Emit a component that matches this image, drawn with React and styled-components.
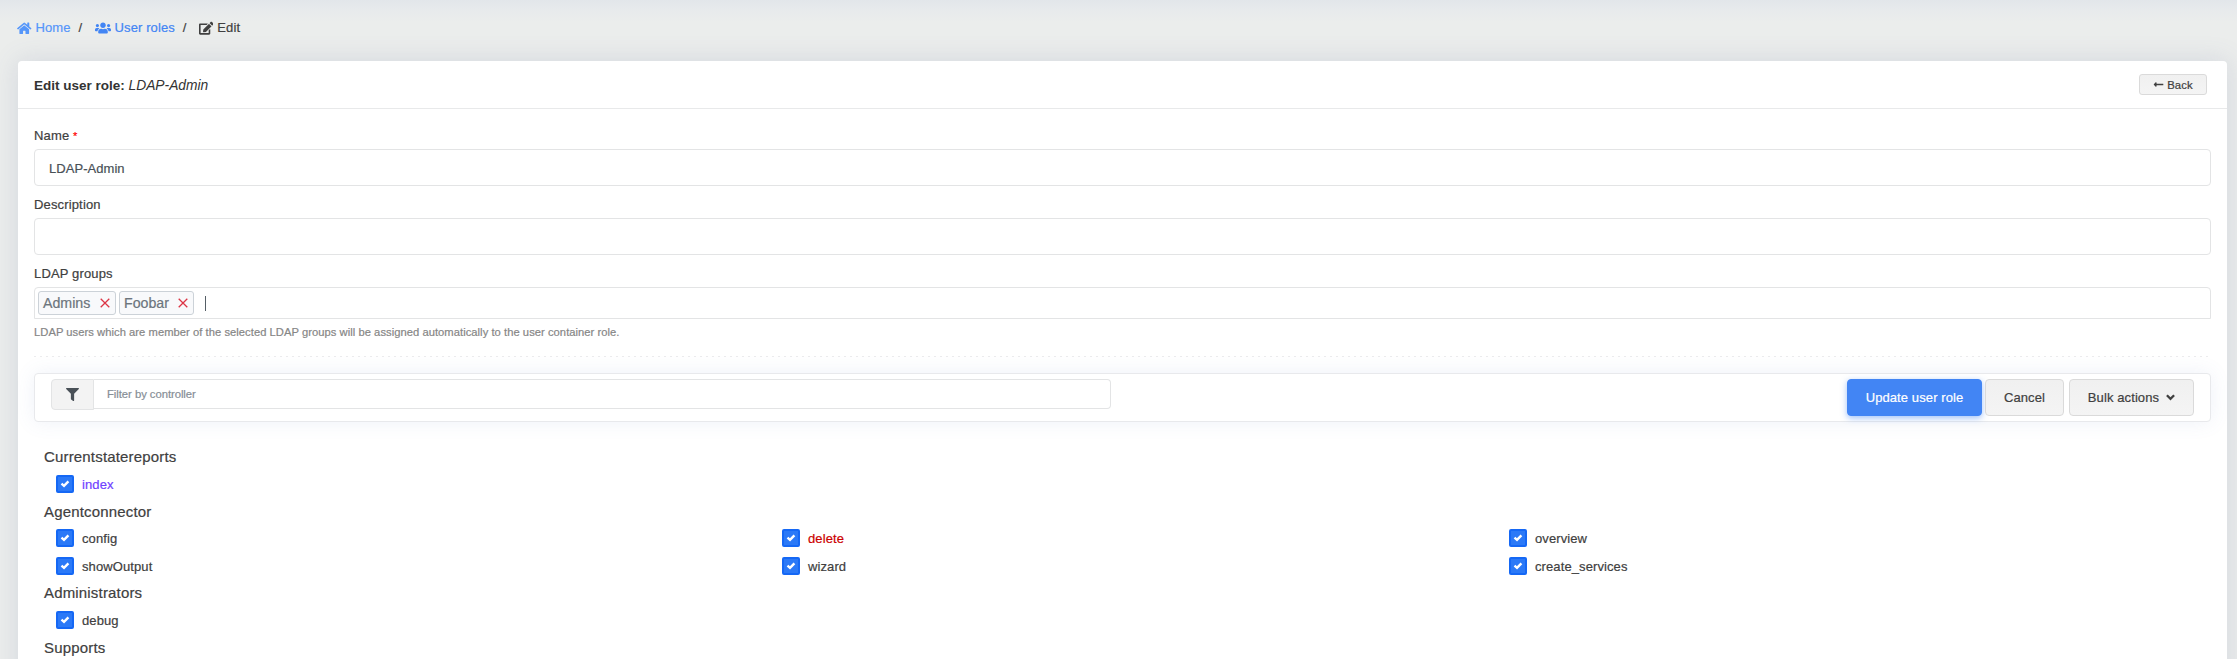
import React from "react";
import styled, { createGlobalStyle } from "styled-components";
import { FaHome, FaUsers, FaEdit, FaFilter, FaLongArrowAltLeft } from "react-icons/fa";

const Global = createGlobalStyle`
  *, *::before, *::after { box-sizing: border-box; }
  body {
    margin: 0;
    overflow: hidden;
    background: #ebedec;
    color: #404040;
    font: 13px/20px "Liberation Sans", Arial, sans-serif;
    letter-spacing: 0.1px;
    -webkit-text-stroke: 0.2px currentColor;
  }
  svg { display: block; flex: none; }
`;

const Page = styled.div`
  height: 659px;
  overflow: hidden;
  padding: 18px 10px 0 17px;
  background: linear-gradient(#e2e6ea, #e7eaec 9px, #ebedec 22px);
`;

const Breadcrumbs = styled.nav`
  display: flex;
  align-items: center;
  height: 20px;
  margin-bottom: 23px;
`;

const Crumb = styled.span`
  display: flex;
  align-items: center;
  gap: ${(p) => p.$gap}px;
  color: ${(p) => p.$color};
`;

const Separator = styled.span`
  width: 24px;
  padding-left: 8px;
`;

const Card = styled.main`
  height: 700px;
  margin-left: 1px;
  background: #fff;
  border-radius: 4px;
  box-shadow: 0 0 26px rgba(86, 102, 150, 0.17);
`;

const CardHeader = styled.header`
  display: flex;
  align-items: center;
  justify-content: space-between;
  height: 48px;
  padding: 0 20px 0 16px;
  border-bottom: 1px solid #e8e9ea;
`;

const Title = styled.h1`
  margin: 0;
  padding-top: 3px;
  font-size: 13.5px;
  font-weight: 700;
  letter-spacing: 0;
  color: #333;
  -webkit-text-stroke: 0;
  em {
    font-size: 13.8px;
    font-weight: 400;
  }
`;

const Button = styled.button`
  display: flex;
  align-items: center;
  justify-content: center;
  flex: none;
  gap: ${(p) => (p.$small ? 3 : 7)}px;
  width: ${(p) => p.$width}px;
  height: ${(p) => (p.$small ? 21 : 37)}px;
  margin: 0 0 0 ${(p) => p.$left || 0}px;
  padding: 0;
  border: 1px solid ${(p) => (p.$primary ? "#4285f4" : "#dadada")};
  border-radius: ${(p) => (p.$small ? 3 : 4)}px;
  background: ${(p) => (p.$primary ? "#4285f4" : "linear-gradient(#f0f0f0, #f4f4f4)")};
  box-shadow: ${(p) => (p.$primary ? "0 2px 6px rgba(66, 133, 244, 0.5)" : "none")};
  color: ${(p) => (p.$primary ? "#fff" : "#404040")};
  font-family: inherit;
  font-size: ${(p) => (p.$small ? 11.3 : 13)}px;
  letter-spacing: 0.1px;
`;

const CardBody = styled.div`
  padding: 17px 16px 0;
`;

const Field = styled.div`
  height: 69px;
`;

const Label = styled.label`
  display: block;
  height: 23px;
  letter-spacing: 0.15px;
`;

const Required = styled.span`
  font-size: 11px;
  color: #f00;
`;

const Input = styled.input`
  display: block;
  width: 100%;
  height: 37px;
  padding: 2px 14px 0;
  border: 1px solid #e3e4e5;
  border-radius: 4px;
  outline: 0;
  background: #fff;
  color: #495057;
  font: inherit;
  letter-spacing: 0.05px;
`;

const TagBox = styled.div`
  display: flex;
  align-items: center;
  gap: 3px;
  height: 32px;
  padding: 0 3px;
  border: 1px solid #e3e4e5;
  border-radius: 4px 4px 0 0;
`;

const Tag = styled.span`
  display: flex;
  align-items: center;
  justify-content: space-between;
  width: ${(p) => p.$width}px;
  height: 24px;
  padding: 0 5px 0 4px;
  border: 1px solid #ccd2d8;
  border-radius: 3px;
  background: #f8f9fb;
  color: #6c757d;
  font-size: 14.2px;
  letter-spacing: 0;
`;

const Caret = styled.i`
  width: 1px;
  height: 15px;
  margin-left: 8px;
  background: #555e66;
`;

const Help = styled.p`
  margin: 3px 0 0;
  font-size: 11.2px;
  letter-spacing: 0.045px;
  color: #868686;
`;

const Divider = styled.hr`
  height: 1px;
  margin: 14px 0 16px;
  border: 0;
  background: repeating-linear-gradient(90deg, #ececee 0 2px, transparent 2px 6px);
`;

const Toolbar = styled.div`
  display: flex;
  align-items: flex-start;
  height: 49px;
  padding: 5px 16px;
  border: 1px solid #e8e9ec;
  border-radius: 4px;
  background: #fff;
  box-shadow: 0 0 20px rgba(90, 115, 190, 0.1);
`;

const FilterGroup = styled.div`
  display: flex;
  align-items: flex-start;
  width: 1060px;
  margin-right: auto;
`;

const FilterIcon = styled.span`
  display: grid;
  place-items: center;
  width: 43px;
  height: 31px;
  border: 1px solid #e3e4e5;
  border-radius: 4px 0 0 4px;
  background: #f3f3f3;
  color: #495057;
`;

const FilterInput = styled(Input)`
  flex: 1;
  width: auto;
  height: 30px;
  padding: 0 13px;
  border-left: 0;
  border-radius: 0 4px 4px 0;
  font-size: 11.3px;
  letter-spacing: -0.05px;
  &::placeholder {
    color: #868e96;
    opacity: 1;
  }
`;

const Sections = styled.div`
  padding: 22px 0 0 10px;
`;

const SectionTitle = styled.h2`
  height: 26px;
  margin: 0;
  font-size: 15px;
  font-weight: 400;
  line-height: ${(p) => (p.$low ? 28 : 26)}px;
  letter-spacing: 0.17px;
`;

const Grid = styled.div`
  display: grid;
  grid-template-columns: 726px 727px 1fr;
  padding-left: 12px;
`;

const Option = styled.label`
  display: flex;
  align-items: center;
  gap: 8px;
  height: 28px;
  color: ${(p) => p.$color || "#404040"};
`;

const OptionText = styled.span`
  padding-top: 2px;
`;

const Check = styled.span`
  display: grid;
  place-items: center;
  width: 18px;
  height: 18px;
  border: 2px solid #1568f5;
  border-radius: 2px;
  background: #2b79f7;
`;

const groups = [
  { name: "Currentstatereports", actions: [["index", "#6f42ff"]] },
  {
    name: "Agentconnector",
    low: true,
    actions: [["config"], ["delete", "#cc0000"], ["overview"], ["showOutput"], ["wizard"], ["create_services"]],
  },
  { name: "Administrators", actions: [["debug"]] },
  { name: "Supports", low: true, actions: [] },
];

function RemoveIcon() {
  return (
    <svg width="10" height="10" viewBox="0 0 10 10" stroke="#dc3545" strokeWidth="1.3">
      <path d="M0.7 0.7 9.3 9.3M9.3 0.7 0.7 9.3" />
    </svg>
  );
}

function TickIcon() {
  return (
    <svg width="10" height="8" viewBox="0 0 10 8" fill="none" stroke="#fff" strokeWidth="2.4">
      <path d="M1.5 3.6 4 5.8 8.4 1.3" />
    </svg>
  );
}

function ChevronIcon() {
  return (
    <svg width="9" height="7" viewBox="0 0 9 7" fill="none" stroke="currentColor" strokeWidth="2.3">
      <path d="M0.9 1.3 4.5 4.9 8.1 1.3" />
    </svg>
  );
}

export default function App() {
  return (
    <Page>
      <Global />
      <Breadcrumbs>
        <Crumb $color="#5596fa" $gap={4}><FaHome size={14.5} />Home</Crumb>
        <Separator>/</Separator>
        <Crumb $color="#4285f4" $gap={4}><FaUsers size={16} />User roles</Crumb>
        <Separator>/</Separator>
        <Crumb $color="#404040" $gap={4}><FaEdit size={14.5} />Edit</Crumb>
      </Breadcrumbs>
      <Card>
        <CardHeader>
          <Title>Edit user role: <em>LDAP-Admin</em></Title>
          <Button $small $width={68}><FaLongArrowAltLeft size={11} />Back</Button>
        </CardHeader>
        <CardBody>
          <Field>
            <Label>Name <Required>*</Required></Label>
            <Input defaultValue="LDAP-Admin" />
          </Field>
          <Field>
            <Label>Description</Label>
            <Input />
          </Field>
          <Label>LDAP groups</Label>
          <TagBox>
            <Tag $width={78}>Admins<RemoveIcon /></Tag>
            <Tag $width={75}>Foobar<RemoveIcon /></Tag>
            <Caret />
          </TagBox>
          <Help>LDAP users which are member of the selected LDAP groups will be assigned automatically to the user container role.</Help>
          <Divider />
          <Toolbar>
            <FilterGroup>
              <FilterIcon><FaFilter size={13} /></FilterIcon>
              <FilterInput placeholder="Filter by controller" />
            </FilterGroup>
            <Button $primary $width={135}>Update user role</Button>
            <Button $width={79} $left={3}>Cancel</Button>
            <Button $width={125} $left={5}>Bulk actions<ChevronIcon /></Button>
          </Toolbar>
          <Sections>
            {groups.map((group) => (
              <section key={group.name}>
                <SectionTitle $low={group.low}>{group.name}</SectionTitle>
                <Grid>
                  {group.actions.map(([name, color]) => (
                    <Option key={name} $color={color}>
                      <Check><TickIcon /></Check>
                      <OptionText>{name}</OptionText>
                    </Option>
                  ))}
                </Grid>
              </section>
            ))}
          </Sections>
        </CardBody>
      </Card>
    </Page>
  );
}
